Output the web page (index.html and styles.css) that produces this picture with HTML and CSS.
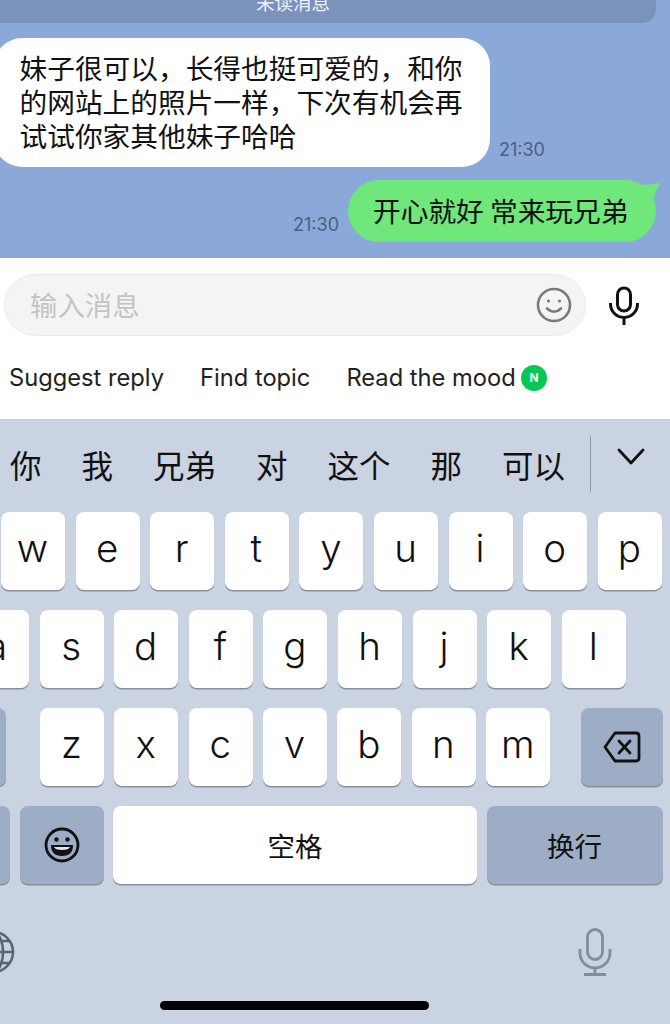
FILE: index.html
```html
<html>
	<head>
		<meta charset="UTF-8"/>
		<link rel="stylesheet" href="styles.css">
	</head>
	<body>
		<div id="chat">
			<div class="unread"><span>未读消息</span></div>
			<div class="msgIn">
				<div class="bubble white">妹子很可以，长得也挺可爱的，和你的网站上的照片一样，下次有机会再试试你家其他妹子哈哈</div>
				<div class="time">21:30</div>
			</div>
			<div class="msgOut">
				<div class="time">21:30</div>
				<div class="bubble green">开心就好 常来玩兄弟<svg class="tail" width="24" height="24" viewBox="0 0 24 24"><path d="M0 4 Q14 6 23 2 Q17 10 16 20 L0 20 Z" fill="#6fe77b"/></svg></div>
			</div>
		</div>
		<div id="inputBox">
			<div class="inputRow">
				<div class="pill">
					<span class="placeholder">输入消息</span>
					<svg width="36" height="36" viewBox="0 0 36 36" fill="none" stroke="#7a7a7a" stroke-width="2.6"><circle cx="18" cy="18" r="16"/><path d="M11 21.5 Q18 28 25 21.5" stroke-linecap="round"/><circle cx="12.5" cy="14" r="1.6" fill="#7a7a7a" stroke="none"/><circle cx="23.5" cy="14" r="1.6" fill="#7a7a7a" stroke="none"/></svg>
				</div>
				<svg class="micBlack" width="32" height="40" viewBox="0 0 32 40" fill="none" stroke="#111" stroke-width="3"><rect x="9.5" y="2" width="13" height="23" rx="6.5"/><path d="M2.5 17 V18 A13.5 13.5 0 0 0 29.5 18 V17 M16 31.5 V39"/></svg>
			</div>
			<div class="chips">
				<span>Suggest reply</span>
				<span>Find topic</span>
				<span class="mood">Read the mood<i class="badge">N</i></span>
			</div>
		</div>
		<div id="keyboard">
			<div class="candidates">
				<span>你</span><span>我</span><span>兄弟</span><span>对</span><span>这个</span><span>那</span><span>可以</span>
				<div class="divider"></div>
				<svg class="chevron" width="28" height="17" viewBox="0 0 28 17" fill="none" stroke="#111" stroke-width="2.8" stroke-linecap="round" stroke-linejoin="round"><path d="M2 2 L14 15 L26 2"/></svg>
			</div>
			<div class="row row1">
				<div class="key">w</div><div class="key">e</div><div class="key">r</div><div class="key">t</div><div class="key">y</div><div class="key">u</div><div class="key">i</div><div class="key">o</div><div class="key">p</div>
			</div>
			<div class="row row2">
				<div class="key">a</div><div class="key">s</div><div class="key">d</div><div class="key">f</div><div class="key">g</div><div class="key">h</div><div class="key">j</div><div class="key">k</div><div class="key">l</div>
			</div>
			<div class="row row3">
				<div class="key dark shift"></div>
				<div class="key">z</div><div class="key">x</div><div class="key">c</div><div class="key">v</div><div class="key">b</div><div class="key">n</div><div class="key">m</div>
				<div class="key dark del">
					<svg width="38" height="32" viewBox="0 0 38 32" fill="none" stroke="#111" stroke-width="2.8" stroke-linejoin="round"><path d="M12 2 H33 Q36 2 36 5 V27 Q36 30 33 30 H12 L2 16 Z"/><path d="M16 10 L27 22 M27 10 L16 22" stroke-linecap="round"/></svg>
				</div>
			</div>
			<div class="row row4">
				<div class="key dark num"></div>
				<div class="key dark emoji">
					<svg width="36" height="36" viewBox="0 0 36 36"><circle cx="18" cy="18" r="16" fill="none" stroke="#111" stroke-width="2.8"/><circle cx="12.5" cy="12.5" r="2.2" fill="#111"/><circle cx="23.5" cy="12.5" r="2.2" fill="#111"/><path d="M7 18 H29 Q29 29 18 29 Q7 29 7 18 Z" fill="#111"/><path d="M10 20 H26 Q25 23 18 23 Q11 23 10 20 Z" fill="#dfe4ec"/></svg>
				</div>
				<div class="key space">空格</div>
				<div class="key dark enter">换行</div>
			</div>
			<div class="bottomIcons">
				<svg class="globe" width="44" height="44" viewBox="0 0 44 44" fill="none" stroke="#5d6470" stroke-width="2.6"><circle cx="22" cy="22" r="20"/><ellipse cx="22" cy="22" rx="10" ry="20"/><path d="M22 2 V42 M2 22 H42 M5 11 H39 M5 33 H39"/></svg>
				<svg width="34" height="48" viewBox="0 0 34 48" fill="none" stroke="#858c99" stroke-width="2.8"><rect x="9.5" y="1.5" width="15" height="30" rx="7.5"/><path d="M2 21 V25 A15 15 0 0 0 32 25 V21 M17 40 V46 M6 46.5 H28"/></svg>
			</div>
			<div class="homeBar"></div>
		</div>
	</body>
</html>
```

FILE: styles.css
```css
html,body{
	margin:0;
	padding:0;
}
body{
	width:670px;
	height:1024px;
	overflow:hidden;
	font-family:"Inter","Noto Sans CJK SC",sans-serif;
	color:#111;
}
#chat{
	height:258px;
	background:#8aa9d9;
	overflow:hidden;
}
.unread{
	height:23px;
	width:656px;
	background:#7a93bc;
	border-radius:0 0 14px 0;
	color:#eef2f8;
	font-family:"Noto Sans CJK SC",sans-serif;
	font-size:18.5px;
	text-align:center;
	line-height:4px;
	overflow:hidden;
	box-sizing:border-box;
	padding-right:70px;
}
.msgIn{
	display:flex;
	align-items:flex-end;
	margin:15px 0 0 -6px;
}
.bubble{
	font-family:"Noto Sans CJK SC",sans-serif;
	font-size:27.7px;
	line-height:34px;
	box-sizing:border-box;
	position:relative;
}
.white{
	width:496px;
	height:129px;
	background:#fff;
	border-radius:28px;
	padding:12px 22px 0 25.5px;
}
.time{
	font-size:18px;
	line-height:20px;
	color:#4c5f80;
}
.msgIn .time{
	margin:0 0 7px 9px;
}
.msgOut{
	display:flex;
	align-items:flex-end;
	justify-content:flex-end;
	width:656px;
	margin-top:13px;
}
.msgOut .time{
	margin:0 9px 7px 0;
}
.green{
	width:308px;
	height:62px;
	background:#6fe77b;
	border-radius:31px;
	padding:13px 0 0 25px;
}
.tail{
	position:absolute;
	right:-6px;
	top:0;
}
#inputBox{
	height:161px;
	background:#fff;
	box-sizing:border-box;
	padding:16px 0 0 4px;
}
.inputRow{
	display:flex;
	align-items:center;
}
.pill{
	width:582px;
	height:62px;
	box-sizing:border-box;
	background:#f4f4f4;
	border:1px solid #ebebeb;
	border-radius:31px;
	display:flex;
	align-items:center;
	justify-content:space-between;
	padding:0 13px 2px 25px;
}
.pill svg{
	margin-top:2px;
}
.placeholder{
	font-family:"Noto Sans CJK SC",sans-serif;
	font-size:27.4px;
	color:#c4c4c4;
}
.micBlack{
	margin-left:22px;
	margin-top:2px;
}
.chips{
	display:flex;
	gap:36px;
	margin:26px 0 0 5px;
	font-size:23.7px;
	line-height:32px;
	color:#222;
}
.mood{
	display:flex;
	align-items:center;
	gap:5.5px;
}
.badge{
	width:26px;
	height:26px;
	border-radius:50%;
	background:#06c755;
	color:#fff;
	font-size:12px;
	font-weight:700;
	font-style:normal;
	line-height:26px;
	text-align:center;
}
#keyboard{
	height:605px;
	background:#c9d3e2;
	overflow:hidden;
}
.candidates{
	height:93px;
	display:flex;
	align-items:center;
	gap:40px;
	padding:0 0 4px 10px;
	font-family:"Noto Sans CJK SC",sans-serif;
	font-size:31.5px;
	box-sizing:border-box;
}
.divider{
	width:1px;
	height:56px;
	background:#8e97a5;
	margin:0 0 0 -15px;
}
.chevron{
	margin:-14px 0 0 -14px;
}
.row{
	display:flex;
	gap:10.6px;
	margin-bottom:20px;
	height:78px;
}
.row1{
	margin-left:1px;
}
.row2{
	margin-left:-35px;
}
.row3{
	margin-left:-58px;
	gap:10.4px;
}
.row4{
	margin-left:-74px;
	gap:9.5px;
}
.key{
	flex:none;
	width:64px;
	height:78px;
	background:#fff;
	border-radius:8px;
	box-shadow:0 1.5px 0 #8a8f99;
	font-size:38.5px;
	font-weight:300;
	display:flex;
	align-items:center;
	justify-content:center;
	padding:0 1px 7px 0;
	box-sizing:border-box;
}
.dark{
	background:#9dadc6;
}
.shift{
	margin-right:23.5px;
}
.del{
	width:82px;
	margin-left:20px;
	padding:0;
}
.num{
	width:84px;
}
.emoji{
	width:84px;
	padding:0;
}
.space{
	width:364px;
	font-family:"Noto Sans CJK SC",sans-serif;
	font-size:27.5px;
	font-weight:400;
	padding:0;
}
.enter{
	width:176px;
	font-family:"Noto Sans CJK SC",sans-serif;
	font-size:27.5px;
	font-weight:400;
	padding:0;
}
.bottomIcons{
	display:flex;
	justify-content:space-between;
	align-items:center;
	width:641px;
	margin:44px 0 0 -29px;
}
.globe{
	flex:none;
}
.homeBar{
	width:269px;
	height:9px;
	background:#000;
	border-radius:5px;
	margin:25px 0 0 160px;
}
```
